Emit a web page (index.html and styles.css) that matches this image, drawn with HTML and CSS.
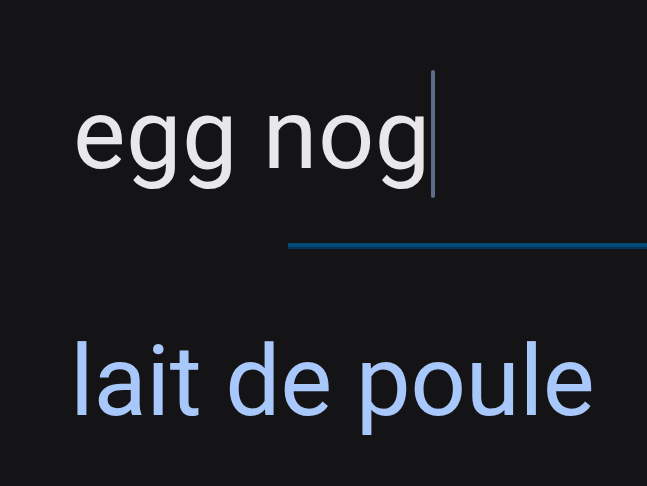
FILE: index.html
```html
<!DOCTYPE html>
<html lang="en">
<head>
  <meta charset="UTF-8" />
  <title>Translate</title>
  <link rel="stylesheet" href="styles.css">
</head>
<body>

<div class="panel">
  <div class="source">
    <span class="source-text">egg nog</span><span class="caret"></span>
  </div>

  <div class="divider"></div>

  <div class="result">lait de poule</div>
</div>

</body>
</html>
```

FILE: styles.css
```css
* { margin: 0; padding: 0; box-sizing: border-box; }

body {
  background: #141416;
  font-family: Roboto, 'Noto Sans', sans-serif;
  height: 100vh;
  overflow: hidden;
}

.panel {
  display: flex;
  flex-direction: column;
  padding-left: 70px;
}

.source {
  display: flex;
  align-items: center;
  height: 128px;
  margin-top: 70px;
  padding-left: 3px;
}

.source-text {
  font-size: 99px;
  line-height: 1;
  letter-spacing: 0.4px;
  color: #e8e8ea;
}

.caret {
  width: 4px;
  height: 128px;
  border-radius: 2px;
  background: #5d6c88;
}

.divider {
  margin: 45px 0 0 218px;
  height: 6px;
  background: #024a78;
  border-bottom: 2px solid #03365a;
}

.result {
  margin-top: 74px;
  font-size: 98px;
  line-height: 1.2;
  letter-spacing: -0.4px;
  color: #a8c7fa;
}
```
